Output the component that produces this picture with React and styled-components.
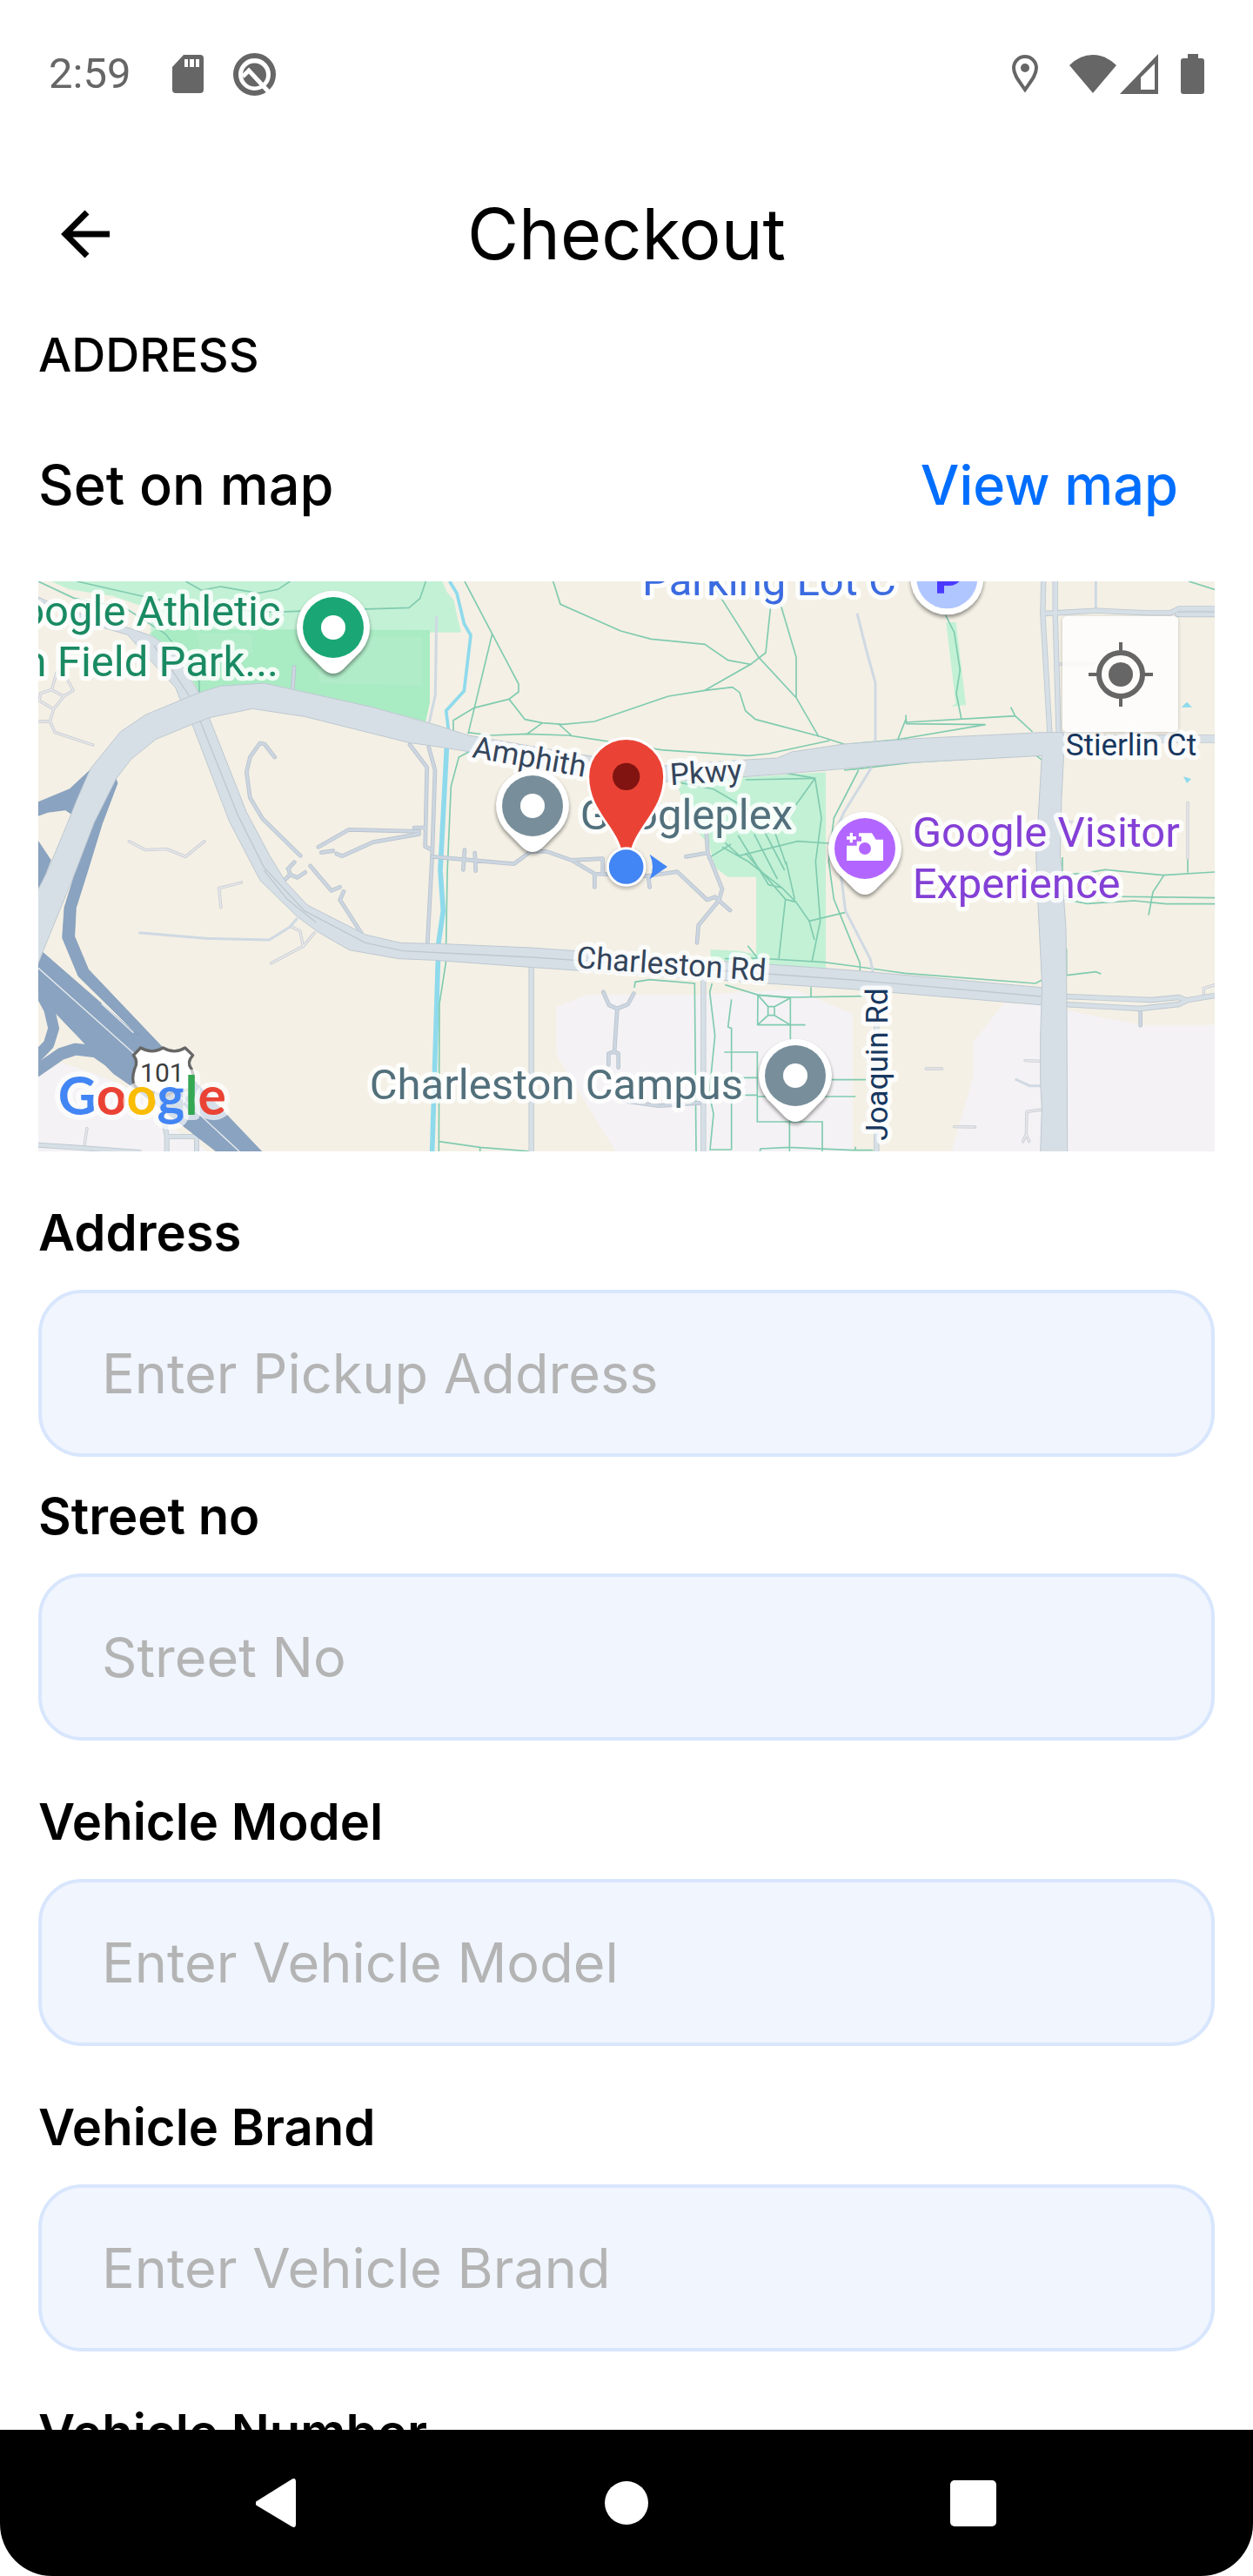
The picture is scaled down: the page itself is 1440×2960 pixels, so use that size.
import React from "react";
import styled, { createGlobalStyle } from "styled-components";

const GlobalStyle = createGlobalStyle`
  *, *::before, *::after { box-sizing: border-box; }
  body {
    margin: 0;
    background: #ffffff;
    color: #000000;
    font-family: Inter, "Noto Sans", sans-serif;
  }
`;

const Screen = styled.div`
  display: flex;
  flex-direction: column;
  height: 100vh;
  background: #ffffff;
`;

const StatusBar = styled.div`
  display: flex;
  flex: none;
  align-items: center;
  justify-content: space-between;
  height: 170px;
  padding: 0 56px;
  color: #666666;
`;

const StatusGroup = styled.div`
  display: flex;
  align-items: center;
  gap: ${(p) => p.$gap}px;
`;

const Clock = styled.time`
  margin-right: 14px;
  font-family: Roboto, sans-serif;
  font-size: 49px;
  line-height: 56px;
`;

const Glyph = styled.svg`
  display: block;
  flex: none;
  width: ${(p) => p.$w}px;
  height: ${(p) => p.$h}px;
  fill: currentColor;
`;

const Header = styled.header`
  display: grid;
  flex: none;
  grid-template-columns: 84px 1fr 84px;
  align-items: center;
  height: 198px;
  padding: 0 56px;
`;

const IconButton = styled.button`
  display: flex;
  align-items: center;
  justify-content: center;
  width: 84px;
  height: 84px;
  padding: 0;
  border: 0;
  background: none;
  color: inherit;
  cursor: pointer;
`;

const Title = styled.h1`
  margin: 0;
  font-size: 81px;
  font-weight: 400;
  line-height: 96px;
  text-align: center;
`;

const Content = styled.main`
  flex: 1;
  min-height: 0;
  overflow: hidden;
  padding: 0 44px;
`;

const SectionTitle = styled.h2`
  margin: 0 0 69px;
  font-size: 54px;
  font-weight: 500;
  line-height: 80px;
`;

const MapRow = styled.div`
  display: flex;
  align-items: center;
  justify-content: space-between;
  margin-bottom: 71px;
  padding-right: 42px;
  font-size: 63px;
  font-weight: 500;
  line-height: 80px;
`;

const MapLink = styled.a`
  color: #006eff;
  text-decoration: none;
`;

const MapFrame = styled.section`
  position: relative;
  overflow: hidden;
  margin-bottom: 53px;
`;

const MapCanvas = styled.svg`
  display: block;
  width: 100%;
  height: auto;
  font-family: Roboto, sans-serif;
`;

const LocateButton = styled(IconButton)`
  position: absolute;
  top: 40px;
  right: 42px;
  width: 133px;
  height: 133px;
  border-radius: 5px;
  background: rgba(255, 255, 255, 0.8);
  box-shadow: 0 1px 4px rgba(0, 0, 0, 0.2);
  color: #666666;
`;

const Field = styled.div`
  display: flex;
  flex-direction: column;
  gap: 26px;
  margin-bottom: ${(p) => (p.$tight ? 28 : 53)}px;
`;

const Label = styled.label`
  font-size: 58px;
  font-weight: 600;
  line-height: 80px;
`;

const TextBox = styled.input`
  width: 100%;
  height: 192px;
  padding: 0 69px;
  border: 4px solid #d8e6fd;
  border-radius: 50px;
  outline: 0;
  background: #f0f5fe;
  color: #000000;
  font-family: inherit;
  font-size: 63px;
  &::placeholder {
    color: #b4b4b4;
    opacity: 1;
  }
`;

const NavBar = styled.nav`
  display: grid;
  flex: none;
  grid-template-columns: repeat(3, 1fr);
  align-items: center;
  justify-items: center;
  height: 168px;
  padding: 0 123px;
  border-radius: 0 0 60px 60px;
  background: #000000;
  color: #ffffff;
`;

const Halo = styled.text`
  fill: ${(p) => p.$ink};
  stroke: rgba(255, 255, 255, 0.82);
  stroke-width: 32px;
  stroke-linejoin: round;
  paint-order: stroke;
  font-size: ${(p) => (p.$street ? 105 : 147)}px;
`;

const LogoText = styled.text`
  font-family: Lato, sans-serif;
  font-size: 182px;
  font-weight: 700;
  stroke: rgba(255, 255, 255, 0.65);
  stroke-width: 36px;
  stroke-linejoin: round;
  paint-order: stroke;
`;

const FIELDS = [
  { id: "address", label: "Address", placeholder: "Enter Pickup Address", tight: true },
  { id: "street", label: "Street no", placeholder: "Street No" },
  { id: "model", label: "Vehicle Model", placeholder: "Enter Vehicle Model" },
  { id: "brand", label: "Vehicle Brand", placeholder: "Enter Vehicle Brand" },
  { id: "number", label: "Vehicle Number", placeholder: "Enter Vehicle Number" },
];

/* A street: a darker casing under a lighter surface. */
function Road({ d, w = 9, fill = "#ccd6e1", edge = "#b9c3ce" }) {
  return (
    <g fill="none" strokeLinecap="round" strokeLinejoin="round">
      <path d={d} stroke={edge} strokeWidth={w + 5} />
      <path d={d} stroke={fill} strokeWidth={w} />
    </g>
  );
}

const DROP = "M-97 80A126 126 0 1 1 97 80L35 143Q0 175 -35 143Z";
const DISC = "M-126 0A126 126 0 1 1 126 0A126 126 0 1 1 -126 0Z";

function Pin({ x, y, color, shape = DROP, children }) {
  return (
    <g transform={`translate(${x} ${y})`}>
      <path d={shape} fill="#000" opacity="0.4" transform="translate(0 9)" filter="url(#soft)" />
      <path d={shape} fill="#fff" />
      <circle r="105" fill={color} />
      {children || <circle r="42" fill="#fff" />}
    </g>
  );
}

const SURFACE = "#d7dfe6";
const EDGE = "#bdc8d1";

function CityMap() {
  return (
    <MapCanvas viewBox="42 54 4056 1965" role="img" aria-label="Map around Googleplex">
      <defs>
        <filter id="soft" x="-30%" y="-30%" width="160%" height="160%">
          <feGaussianBlur stdDeviation="7" />
        </filter>
      </defs>
      <rect x="42" y="54" width="4056" height="1965" fill="#f4f0e5" />

      {/* built-up areas */}
      <g fill="#f4f2f4">
        <path d="M42 1760L120 1712L250 1755L370 1810L480 1920L625 2019H42Z" />
        <path d="M1828 1520L1935 1480H2310L2650 1460L2850 1545V2019H2032L1828 1685Z" />
        <path d="M3370 1510H3510V2019H3192L3265 1760V1642Z" />
        <path d="M3580 1530L3840 1583H4098V2019H3580Z" />
      </g>

      {/* parks */}
      <g fill="#c3f1d5">
        <path d="M85 54L150 82L300 105L430 150V230H1500L1485 170L1475 120L1450 90L1435 54Z" />
        <path d="M2240 745L2757 712V1390L2517 1375V1073H2420L2375 1040L2355 962L2300 900Z" />
        <path d="M2360 1323L2460 1328L2517 1340L2580 1372L2360 1360Z" />
        <path d="M3172 195H3206L3240 480L3190 486L3205 475Z" />
      </g>
      <path d="M425 235L450 218L1392 222V470L1378 538L1190 487L930 428L830 407L670 415L597 438L520 300Z" fill="#a9ebc3" />
      <path d="M590 235H780V300H600ZM1080 245H1365V413L1010 405V330H1080Z" fill="#b3edcb" opacity="0.7" />

      {/* water */}
      <path d="M1460 54L1485 95L1503 170L1510 200L1533 240L1510 432L1448 500L1456 565" fill="none" stroke="#8edaec" strokeWidth="11" />
      <path d="M1450 630L1428 1050L1438 1190L1422 1300L1400 2019" fill="none" stroke="#8edaec" strokeWidth="17" />
      <path d="M3983 488L4002 470L4020 488ZM3990 727L4017 735L4002 750Z" fill="#8edaec" />

      {/* footpaths */}
      <g fill="none" stroke="#80cbb0" strokeWidth="5">
        <path d="M42 54L165 112L340 145L480 235L540 310L597 400V438M175 54L400 105L560 140L850 160L1000 155L1320 145L1358 113L1378 54M550 54L605 85L670 72L800 95L868 82L910 54" />
        <path d="M1512 54L1607 235L1698 408V435L1665 460L1720 530L1780 542L1850 547L1960 537L2215 450L2340 430L2435 419L2460 437L2480 500L2515 530L2735 588L2820 615" />
        <path d="M1607 235L1524 580M1665 460L1545 490L1473 533V570M1524 575L1600 585L1725 580L1870 585L2000 605L2190 635L2490 655L2560 648L2770 603M1725 582L1780 542M1835 545L1880 585" />
        <path d="M1817 54L1842 133L2050 225L2155 253L2340 271L2420 326L2498 340L2340 430M2498 340L2550 300L2567 140M2370 70L2525 315L2655 455L2733 590M2600 130L2655 315V455M2530 54L2560 120" />
        <path d="M2820 617L3000 600L3308 548L3035 545L3033 515M3033 540L3410 518L3395 488M3410 518L3470 573M3033 530L3005 600M3170 170L3200 230L3220 360L3207 440L3225 530M4008 54L4098 82" />
        <path d="M2480 738L2720 733M2820 705L2870 700L3060 678L3480 653L3503 670M2870 705L2785 870L2767 1020L2785 1150L2850 1310L2875 1370V1396" />
        <path d="M1530 640L1492 660L1465 760L1452 1060L1447 1370L1425 1510L1423 2019M1423 1985L1565 2005L1740 2019M1565 2005V2019" />
        <path d="M2240 745L2370 770L2490 840M2620 715L2720 733L2742 870L2722 1020L2738 1225L2710 1362M2720 733L2600 900M2350 1010L2430 960M2410 955L2460 1000L2660 950L2767 957M2455 930L2560 1100L2605 1110M2510 925L2590 1080M2545 915L2615 1050M2575 900L2620 1030M2400 970L2490 1020L2605 1110L2655 1160L2700 1225L2718 1290M2480 990L2618 1150L2595 1355M2618 1150L2655 1160M2620 1020L2650 1150M2700 1225L2825 1195M2488 1310L2520 1350" />
        <path d="M2410 1355L2520 1353L2750 1367L2850 1380L3030 1405L3480 1440L3503 1428M2097 1455L2100 1435L2150 1427L2305 1440L2310 2019M2410 1445L2525 1480L2635 1488L2895 1484M2706 1453V1485" />
        <path d="M2365 1440L2357 1470L2375 1620L2355 1820L2370 1890L2358 2013H2432M2432 1495L2420 1590L2432 1595V2013M2523 1480L2635 1490V1583H2522ZM2523 1480L2558 1520H2580V1550H2558L2522 1583M2558 1520V1550M2580 1520L2635 1490M2580 1550L2635 1583H2687M2635 1583V1650" />
        <path d="M2407 1677H2521V1917H2745V2019M2360 1765H2520M2360 1825H2520M2520 1830H2860M2775 1772H2895M2632 1900V2019M2530 2019L2532 2010L2630 2005L2850 2015H2920M2859 2003V2015" />
        <path d="M3573 1005V1150L3660 1165L3820 1155L3930 1166H4098M3573 1065L3650 1060L3720 1048L3920 1067L4098 1056M3923 1067L3885 1125L3870 1205M3575 1138L4098 1145M4005 1010V1058M3587 1320V1412M3588 1412L3688 1400L3706 1407" />
      </g>

      {/* service roads */}
      <Road w={5} fill="#e6e8ec" edge="#c9ccd1" d="M42 537H82L95 495L45 465L50 440L88 428L130 450L162 430L125 360V300M125 360L105 370L88 428M130 450L95 495M82 537L100 575L230 618M355 950L412 980L485 977L550 1003L615 950M742 1092L665 1112L672 1178M845 1370L955 1312L995 1265M955 1312L945 1260L915 1245M210 1940L200 2005M4005 817V1008M3444 1706L3500 1708M3503 1875L3450 1882L3448 1960L3437 1985M3448 1960L3458 1985M3103 1734H3158M3200 1934L3272 1935M4060 1480V1457L4098 1445M3595 883H3670M3560 339H3680" />
      <Road d="M857 660L822 615L806 612L772 660L760 712L772 800L815 872L946 1000M1008 970L1113 910L1355 916M1070 993L1090 1001L1197 953L1355 925M1338 903H1375M1323 617L1382 695L1376 968L1400 980M1388 625L1410 705L1400 1000L1384 1300M924 350L919 425M1018 989L1058 983M903 1045L925 1022M980 1035L1052 1120L1082 1108M1095 1123L1082 1152L1155 1265M890 1085L910 1065L905 1045M910 1065L935 1075L962 1057" />
      <Road d="M1400 1003L1645 1025L1682 1028L1740 985L1795 985L1880 1015L1960 1062L2140 1070L2245 1055L2348 1152L2375 1142L2427 1188M1960 1062V1108M2145 1070L2150 1108M1880 1015L1988 1010V1062M1512 980L1507 1048M1547 990L1550 1052M2275 1003L2350 990L2345 915M2350 990L2400 1115L2388 1155L2318 1240L2313 1300M1990 1470L2010 1515L2038 1527L2075 1512L2095 1475M2038 1527L2028 1678M2008 1720V1682L2028 1675L2042 1682V1730M2060 1845L2180 1862L2325 1852M3842 1530V1585" />
      <g fill="none" stroke="#cfd9e3" strokeWidth="9">
        <path d="M388 1265L620 1285L838 1290L910 1245L935 1215M1415 175L1411 445L1390 540M2865 164L2895 284L2928 404V624M2915 695L2820 850L2770 960M2810 1070L2825 1190L2910 1355L2920 1400M3410 1770L3460 1793H3500M3688 54V152" />
      </g>
      <Road w={13} fill={SURFACE} edge={EDGE} d="M42 1997L160 2005L390 2022M475 1910L485 1968H588V2022M485 1968V2022" />
      <Road w={14} fill={SURFACE} edge={EDGE} d="M1742 1350V2040M2335 1420V2040M2932 1450V2040M3508 40L3505 165L3530 590M3548 40V165L3560 590M3510 165L3690 155L3870 163H3945L3975 148H4110M3970 168H4110M3580 1485L3880 1497L3975 1488L4000 1498L4110 1480M3580 1512L3840 1527L3975 1512L4000 1500" />
      <Road w={24} fill={SURFACE} edge={EDGE} d="M3570 597H4120" />

      {/* freeway */}
      <g fill="#8aa3c0" stroke="#7995b7" strokeWidth="2">
        <path d="M42 815L150 770L220 705L178 805L155 855L135 842L75 850L42 862Z" />
        <path d="M42 950L85 1015L60 1080L42 1110Z" />
        <path d="M310 735L315 750L262 890L213 1050L172 1180L167 1278L215 1392L470 1660L812 2019H655L365 1795L300 1750L42 1480V1320L60 1335L390 1622L180 1415L125 1283L132 1178L172 1050L235 885Z" />
      </g>
      <g fill="none" stroke="#8aa3c0" strokeLinejoin="round">
        <path d="M45 1465L80 1530L95 1595L78 1650L30 1700" strokeWidth="38" />
        <path d="M30 1745L120 1683L170 1667L240 1675L385 1775" strokeWidth="42" />
      </g>
      <path d="M42 1387L370 1680L735 2019M260 1510L370 1610" fill="none" stroke="#e8ebee" strokeWidth="4" />

      {/* main roads */}
      <g fill={SURFACE} stroke={EDGE} strokeWidth="3">
        <path d="M42 108L100 135L260 190L355 215L440 245L510 300L600 445L535 470L515 420L415 312L350 238L200 195L42 120Z" />
        <path d="M570 540L700 880L807 1085L935 1210L1010 1265L1115 1325L1285 1355L1410 1360L1750 1385L2850 1460L3510 1515V1455L2850 1395L2570 1375L1740 1317L1440 1304L1290 1300L1170 1272L970 1170L895 1090L840 1000L760 850L628 516Z" />
        <path d="M30 1140L75 1050L150 870L178 800L222 700L325 573L412 514L530 465L597 438L670 415L820 405L1190 487L1410 548L1525 585L1900 650L2200 690L2470 670L2590 663L2640 642L2820 615L3070 596L3500 575H3575L3580 600L3570 800L3565 1000L3570 1040L3585 1250L3588 1520L3590 2025H3497L3502 1870L3497 1780V1620L3503 1450L3488 1150L3482 1000L3502 655L3030 680L2820 700L2620 717L2470 728L2200 745L1900 720L1520 640L1440 627L1320 610L960 520L780 493L632 524L570 548L448 598L362 667L310 735L235 885L172 1050L60 1325L30 1400Z" />
      </g>
      <path d="M600 535L730 860L820 1040L960 1190L1170 1300L1300 1328L1440 1335L1750 1350L2850 1428L3500 1485M440 275L510 370L563 450M820 1050L900 1150L1000 1230" fill="none" stroke={EDGE} strokeWidth="4" />

      {/* road names */}
      <Halo $street $ink="#34455b" transform="translate(1535 660) rotate(10)">Amphith</Halo>
      <Halo $street $ink="#34455b" transform="translate(2222 757) rotate(-4)">Pkwy</Halo>
      <Halo $street $ink="#34455b" transform="translate(1895 1386) rotate(4)">Charleston Rd</Halo>
      <Halo $street $ink="#17375f" x="3584" y="655">Stierlin Ct</Halo>
      <Halo $street $ink="#17375f" transform="translate(2970 1982) rotate(-90)">Joaquin Rd</Halo>

      {/* place names */}
      <Halo $ink="#1a8a63" x="878" y="208" textAnchor="end">Google Athletic</Halo>
      <Halo $ink="#1a8a63" x="870" y="380" textAnchor="end">Recreation Field Park...</Halo>
      <Halo $ink="#3b6be0" x="2124" y="103">Parking Lot C</Halo>
      <Halo $ink="#52707c" x="1910" y="908">Googleplex</Halo>
      <Halo $ink="#8440d6" x="3056" y="970">Google Visitor</Halo>
      <Halo $ink="#8440d6" x="3056" y="1145">Experience</Halo>
      <Halo $ink="#52707c" x="1184" y="1840">Charleston Campus</Halo>

      <Pin x={1059} y={213} color="#1aa775" />
      <Pin x={1746} y={828} color="#788f9b" />
      <Pin x={2652} y={1758} color="#788f9b" />
      <Pin x={2892} y={975} color="#b266ff">
        <path d="M-21 -53H24L38 -31H63V42H-63V-10H-28V-25H-12V-41H-21Z" fill="#fff" />
        <path d="M-63 -42H-52V-54H-42V-42H-30V-31H-42V-20H-52V-31H-63Z" fill="#fff" />
        <circle r="21" fill="#b266ff" />
      </Pin>
      <Pin x={3175} y={43} color="#b0c6ff" shape={DISC}>
        <path d="M-22 52V-58H8A35 35 0 0 1 8 14H-22" fill="none" stroke="#4a3aff" strokeWidth="24" />
      </Pin>

      {/* route shield */}
      <path d="M395 1662Q435 1685 472 1662Q512 1685 548 1662L575 1688Q552 1712 570 1735C590 1790 565 1810 530 1812Q495 1815 472 1832Q450 1815 415 1812C375 1808 358 1785 374 1735Q388 1710 370 1688Z" fill="#fff" stroke="#666" strokeWidth="10" strokeLinejoin="round" />
      <text x="469" y="1780" textAnchor="middle" fontSize="90" fill="#3c3c3c">101</text>

      <LogoText x="110" y="1893">
        <tspan fill="#4285f4">G</tspan>
        <tspan fill="#ea4335">o</tspan>
        <tspan fill="#fbbc05">o</tspan>
        <tspan fill="#4285f4">g</tspan>
        <tspan fill="#34a853">l</tspan>
        <tspan fill="#ea4335">e</tspan>
      </LogoText>

      {/* current position and destination marker */}
      <circle cx="2069" cy="1044" r="70" fill="#000" opacity="0.25" filter="url(#soft)" />
      <path d="M2053 1000C2038 900 1937 850 1937 727A132 132 0 0 1 2201 727C2201 850 2100 900 2085 1000Z" fill="#ea4335" stroke="#fff" strokeWidth="9" />
      <circle cx="2069" cy="727" r="47" fill="#811411" />
      <circle cx="2069" cy="1038" r="64" fill="#4285f4" stroke="#fff" strokeWidth="9" />
      <path d="M2150 995L2211 1038L2150 1081Q2170 1038 2150 995Z" fill="#4285f4" />
    </MapCanvas>
  );
}

export default function App() {
  return (
    <Screen>
      <GlobalStyle />
      <StatusBar>
        <StatusGroup $gap={34}>
          <Clock>2:59</Clock>
          <Glyph $w={36} $h={44} viewBox="0 0 36 44" aria-hidden="true">
            <path fillRule="evenodd" d="M13 0H32Q36 0 36 4V40Q36 44 32 44H4Q0 44 0 40V14ZM14 5V14H18V5ZM20 5V14H25V5ZM27 5V14H31V5Z" />
          </Glyph>
          <Glyph $w={49} $h={49} viewBox="0 0 49 49" aria-hidden="true">
            <circle cx="24.500" cy="24.500" r="21.500" fill="none" stroke="currentColor" strokeWidth="6" />
            <circle cx="24.500" cy="25" r="13.500" />
            <path d="M11 27L18 20L42 46" fill="none" stroke="#fff" strokeWidth="5" />
          </Glyph>
        </StatusGroup>
        <StatusGroup $gap={4}>
          <Glyph $w={64} $h={46} viewBox="0 0 64 46" aria-hidden="true">
            <path d="M17 41C10 31 4 24 4 16A13 13 0 0 1 30 16C30 24 24 31 17 41Z" fill="none" stroke="currentColor" strokeWidth="4" />
            <circle cx="17" cy="16" r="5" />
          </Glyph>
          <Glyph $w={54} $h={44} viewBox="0 0 54 44" aria-hidden="true">
            <path d="M27 44L0 12Q12 0 27 0T54 12Z" />
          </Glyph>
          <Glyph $w={66} $h={46} viewBox="0 0 66 46" aria-hidden="true">
            <path fillRule="evenodd" d="M44 0V46H0ZM40 11L24 27V41H40Z" />
          </Glyph>
          <Glyph $w={27} $h={46} viewBox="0 0 27 46" aria-hidden="true">
            <path d="M8 0H20V5H24Q27 5 27 8V43Q27 46 24 46H3Q0 46 0 43V8Q0 5 3 5H8Z" />
          </Glyph>
        </StatusGroup>
      </StatusBar>

      <Header>
        <IconButton type="button" aria-label="Back">
          <Glyph $w={56} $h={56} viewBox="0 0 56 56">
            <path d="M56 28H6M30 3L5 28L30 53" fill="none" stroke="currentColor" strokeWidth="7" />
          </Glyph>
        </IconButton>
        <Title>Checkout</Title>
      </Header>

      <Content>
        <SectionTitle>ADDRESS</SectionTitle>
        <MapRow>
          <span>Set on map</span>
          <MapLink href="#map">View map</MapLink>
        </MapRow>
        <MapFrame id="map">
          <CityMap />
          <LocateButton type="button" aria-label="Show my location">
            <Glyph $w={74} $h={74} viewBox="0 0 74 74">
              <circle cx="37" cy="37" r="25" fill="none" stroke="currentColor" strokeWidth="6" />
              <circle cx="37" cy="37" r="14" />
              <path d="M37 0V10M37 64V74M0 37H10M64 37H74" stroke="currentColor" strokeWidth="4" />
            </Glyph>
          </LocateButton>
        </MapFrame>
        {FIELDS.map((f) => (
          <Field key={f.id} $tight={f.tight}>
            <Label htmlFor={f.id}>{f.label}</Label>
            <TextBox id={f.id} type="text" placeholder={f.placeholder} />
          </Field>
        ))}
      </Content>

      <NavBar aria-label="System">
        <IconButton type="button" aria-label="Go back">
          <Glyph $w={56} $h={56} viewBox="3 0 56 56">
            <path d="M4 26L44 1Q49 -2 49 4V52Q49 58 44 55L4 31Q0 28.500 4 26Z" />
          </Glyph>
        </IconButton>
        <IconButton type="button" aria-label="Home">
          <Glyph $w={50} $h={50} viewBox="0 0 50 50">
            <circle cx="25" cy="25" r="25" />
          </Glyph>
        </IconButton>
        <IconButton type="button" aria-label="Recent apps">
          <Glyph $w={53} $h={53} viewBox="0 0 53 53">
            <rect width="53" height="53" rx="5" />
          </Glyph>
        </IconButton>
      </NavBar>
    </Screen>
  );
}
